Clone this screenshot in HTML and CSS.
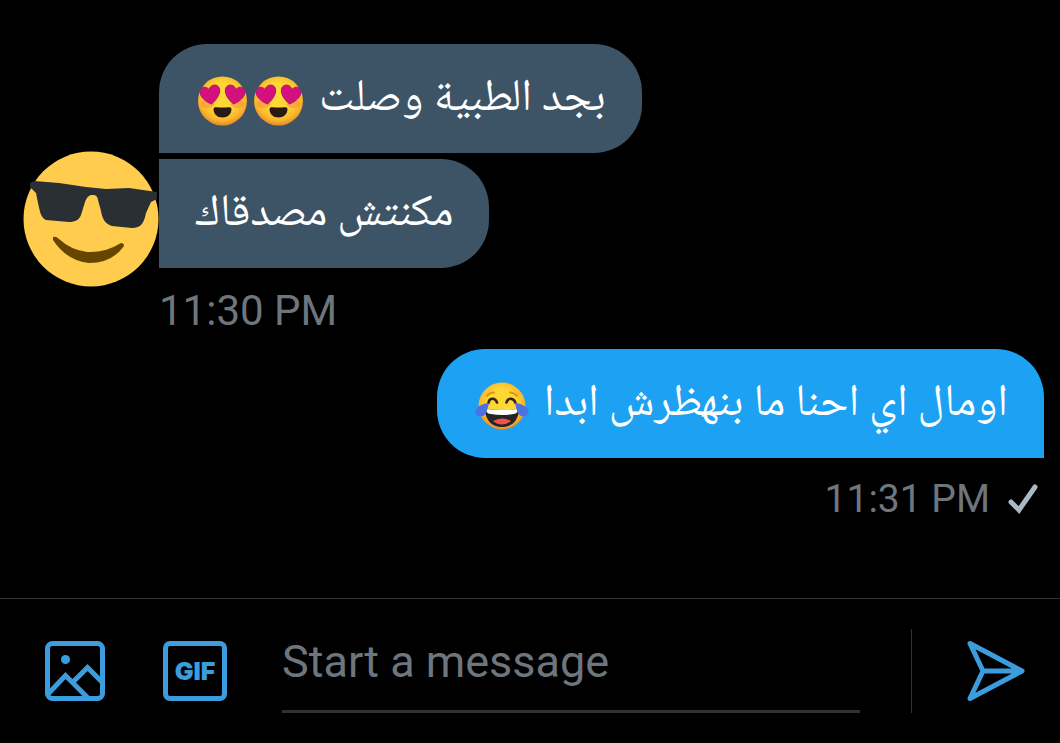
FILE: index.html
```html
<!DOCTYPE html>
<html lang="en">
<head>
    <meta charset="UTF-8">
    <meta name="viewport" content="width=device-width, initial-scale=1.0">
    <title>Messages</title>
    <link rel="stylesheet" href="styles.css">
</head>
<body>
    <!-- Shared emoji drawings -->
    <svg class="defs" aria-hidden="true">
        <defs>
            <radialGradient id="face" cx="50%" cy="42%" r="56%">
                <stop offset="0.5" stop-color="#fdd835"/>
                <stop offset="0.85" stop-color="#fbb52c"/>
                <stop offset="1" stop-color="#e8922a"/>
            </radialGradient>
            <symbol id="heart-eyes" viewBox="0 0 50 50">
                <circle cx="25" cy="25" r="24.5" fill="url(#face)"/>
                <ellipse cx="10" cy="28" rx="7" ry="4" fill="#f7884d" opacity="0.5"/>
                <ellipse cx="40" cy="28" rx="7" ry="4" fill="#f7884d" opacity="0.5"/>
                <path d="M14 28C9 26 3 22 2.500 16C2.500 11 8 9.500 11.500 13.500C13 8.500 19 7.500 21.500 11.500C24 17 19 24 14 28Z" fill="#d3107e" stroke="#b5116b"/>
                <path d="M36 28C41 26 47 22 47.500 16C47.500 11 42 9.500 38.500 13.500C37 8.500 31 7.500 28.500 11.500C26 17 31 24 36 28Z" fill="#d3107e" stroke="#b5116b"/>
                <path d="M16 33C16 30 20 31.500 25 31.500C30 31.500 34 30 34 33C34 38 30 41.500 25 41.500C20 41.500 16 38 16 33Z" fill="#2a1a14"/>
            </symbol>
            <symbol id="joy" viewBox="0 0 54 48">
                <circle cx="27" cy="24" r="23.500" fill="url(#face)"/>
                <path d="M12 14Q14 11 19 10.500M42 14Q40 11 35 10.500" fill="none" stroke="#e58b1f" stroke-width="1.800" stroke-linecap="round"/>
                <path d="M13.500 21C14 16 20 15 22 20.500M31.500 20.500C33 15 39 16 40.500 21" fill="none" stroke="#36261f" stroke-width="2.600" stroke-linecap="round"/>
                <path d="M10 27Q27 29 44 27C44 38 37 45 27 45C17 45 10 38 10 27Z" fill="#252525"/>
                <path d="M10.500 27Q27 29 43.500 27C43 30 41 32 38 32Q27 34 16 32C13 32 11 30 10.500 27Z" fill="#fff"/>
                <path d="M18 39Q27 34 36 39Q32 42.500 27 42.500Q22 42.500 18 39Z" fill="#ef5350"/>
                <path d="M14 21C10 21 1 24 0.500 29C0 34 6 36 9.500 33C12 30.500 13 25 14 21Z" fill="#4b72e0"/>
                <path d="M40 21C44 21 53 24 53.500 29C54 34 48 36 44.500 33C42 30.500 41 25 40 21Z" fill="#4b72e0"/>
            </symbol>
        </defs>
    </svg>

    <main class="thread">
        <section class="received">
            <svg class="avatar" viewBox="0 0 136 136" role="img" aria-label="Smiling face with sunglasses">
                <circle cx="68" cy="68" r="67.500" fill="#ffcc4d"/>
                <path d="M7 32L11 30L36 32L63 36L83 38L106 37L134 41V48L128 51L123 62C121 72 118 77 109 77L89 75C82 73 79 67 78 60L75 49C74 44 72 44 69 44C66 44 64 46 62 51L58 64C56 69 52 71 46 71L23 69C18 67 17 61 15 52L13 42L7 36Z" fill="#292f33"/>
                <path d="M30 86Q33 85 36 88Q48 99 64 101Q82 102 98 92Q101 92 101 95Q89 112 66 112Q44 110 30 89Z" fill="#664500"/>
            </svg>
            <div class="messages">
                <div class="bubble" dir="rtl" lang="ar">
                    <span>بجد الطبية وصلت</span>
                    <span class="emojis">
                        <svg class="heart-eyes" role="img" aria-label="Heart eyes"><use href="#heart-eyes"/></svg>
                        <svg class="heart-eyes" role="img" aria-label="Heart eyes"><use href="#heart-eyes"/></svg>
                    </span>
                </div>
                <div class="bubble" dir="rtl" lang="ar">
                    <span>مكنتش مصدقاك</span>
                </div>
                <time class="time" datetime="23:30">11:30 PM</time>
            </div>
        </section>

        <section class="sent">
            <div class="bubble" dir="rtl" lang="ar">
                <span>اومال اي احنا ما بنهظرش ابدا</span>
                <span class="emojis">
                    <svg class="joy" role="img" aria-label="Tears of joy"><use href="#joy"/></svg>
                </span>
            </div>
            <div class="status">
                <time class="time" datetime="23:31">11:31 PM</time>
                <svg class="check" viewBox="0 0 30 30" role="img" aria-label="Sent">
                    <path d="M3 18L11 26L27 3" fill="none" stroke="#aab8c2" stroke-width="5" stroke-linecap="round"/>
                </svg>
            </div>
        </section>
    </main>

    <form class="composer">
        <button type="button" class="photo" aria-label="Add photo">
            <svg viewBox="0 0 60 60" width="60" height="60" fill="none" stroke="currentColor" stroke-width="5">
                <rect x="2.500" y="2.500" width="55" height="55" rx="5"/>
                <path d="M3 53L20.500 34.500L44 58M29 40L42.500 26.500L58 42"/>
                <circle cx="20.500" cy="18.500" r="4.500" fill="currentColor" stroke="none"/>
            </svg>
        </button>
        <button type="button" class="gif">GIF</button>
        <input type="text" class="message-input" placeholder="Start a message" aria-label="Start a message">
        <div class="send-area">
            <button type="submit" class="send" aria-label="Send">
                <svg viewBox="0 0 58 60" width="58" height="60" fill="none" stroke="currentColor" stroke-width="5" stroke-linejoin="round">
                    <path d="M3 2.500L55 30L3 57.500L16 30ZM16 30H55"/>
                </svg>
            </button>
        </div>
    </form>
</body>
</html>
```

FILE: styles.css
```css
* {
    box-sizing: border-box;
}
body {
    display: flex;
    flex-direction: column;
    min-height: 100vh;
    margin: 0;
    font-family: Roboto, sans-serif;
    color: #6e767d;
    background-color: #000;
}
button {
    padding: 0;
    border: none;
    background: none;
    color: #3b9ddd;
    cursor: pointer;
}
svg {
    display: block;
}
.defs {
    position: absolute;
    width: 0;
    height: 0;
}

/* Conversation */
.thread {
    flex: 1;
    padding: 44px 16px 24px 23px;
}
.received {
    display: flex;
    align-items: flex-end;
}
.avatar {
    flex: none;
    width: 136px;
    height: 136px;
    margin-bottom: 54px;
}
.messages {
    display: flex;
    flex-direction: column;
    align-items: flex-start;
    gap: 6px;
}
.bubble {
    display: flex;
    align-items: center;
    gap: 15px;
    min-height: 109px;
    padding: 0 36px;
    border-radius: 48px 48px 48px 0;
    font-family: "Noto Naskh Arabic UI", "Noto Naskh Arabic", "DejaVu Sans", sans-serif;
    font-size: 45px;
    line-height: 60px;
    color: #fff;
    background-color: #3d5466;
}
.messages .bubble:first-child {
    border-bottom-left-radius: 0;
}
.messages .bubble + .bubble {
    border-top-left-radius: 0;
}
.emojis {
    display: flex;
    flex: none;
    gap: 5px;
    margin: 4px 0 0 2px;
}
.heart-eyes {
    width: 51px;
    height: 50px;
}
.joy {
    width: 54px;
    height: 48px;
}
.time {
    font-size: 42px;
    line-height: 60px;
}
.messages .time {
    margin-top: 7px;
}
.sent {
    display: flex;
    flex-direction: column;
    align-items: flex-end;
    margin-top: 8px;
}
.sent .bubble {
    border-radius: 48px 48px 0 48px;
    background-color: #1da1f2;
}
.status {
    display: flex;
    align-items: center;
    gap: 18px;
    margin-top: 11px;
    padding-right: 6px;
}
.status .time {
    font-size: 39px;
}
.check {
    width: 30px;
    height: 30px;
}

/* Message box */
.composer {
    display: flex;
    align-items: center;
    padding: 30px 35px 30px 45px;
    border-top: 1px solid #2f3336;
}
.gif {
    width: 64px;
    height: 60px;
    margin: 0 55px 0 58px;
    border: 5px solid #3b9ddd;
    border-radius: 7px;
    font: 900 25px/50px Inter, sans-serif;
}
.message-input {
    flex: 1;
    min-width: 0;
    height: 84px;
    padding: 0 0 16px;
    border: none;
    border-bottom: 3px solid #2f3133;
    outline: none;
    font: 45px Roboto, sans-serif;
    color: #fff;
    background: none;
}
.message-input::placeholder {
    color: #6e767d;
    opacity: 1;
}
.send-area {
    display: flex;
    align-items: center;
    height: 84px;
    margin-left: 51px;
    padding-left: 55px;
    border-left: 1px solid #2f3336;
}
```
